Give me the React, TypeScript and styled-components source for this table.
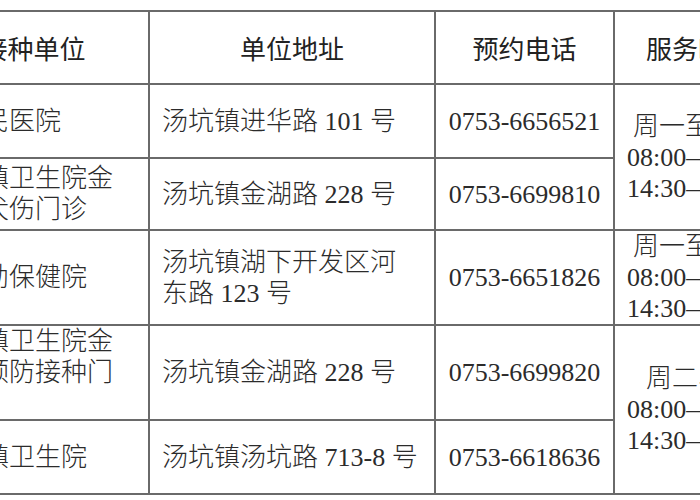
import React from "react";
import styled, { createGlobalStyle } from "styled-components";

const GlobalStyle = createGlobalStyle`
  html, body { margin: 0; padding: 0; background: #ffffff; }
  body { font-family: "Liberation Serif", "Noto Sans CJK SC", serif; }
`;

const Viewport = styled.div`
  width: 700px;
  height: 500px;
  overflow: hidden;
  background: #ffffff;
  padding-top: 10px;
  box-sizing: border-box;
`;

const Table = styled.table`
  border-collapse: collapse;
  table-layout: fixed;
  width: 864px;
  margin-left: -83px;
  font-family: "Liberation Serif", "Noto Sans CJK SC", serif;
  font-size: 26px;
  line-height: 31px;
  color: #2b2b2b;
`;

const Row = styled.tr<{ $h: number }>`
  height: ${(p) => p.$h}px;
`;

const HeadCell = styled.th`
  border: 2px solid #6a6a6a;
  padding: 0 12px;
  font-family: "Noto Sans CJK SC", sans-serif;
  font-weight: 400;
  text-align: center;
  vertical-align: middle;
  white-space: nowrap;
  color: #222222;
`;

const Cell = styled.td<{ $align?: "left" | "center" }>`
  border: 2px solid #6a6a6a;
  padding: 0 12px;
  font-weight: 300;
  text-align: ${(p) => p.$align ?? "left"};
  vertical-align: middle;
  white-space: nowrap;
`;

type Entry = {
  unit: string[];
  addr: string[];
  phone: string;
  h: number;
  hours?: { lines: string[]; span: number };
};

const hoursA = ["周一至周五", "08:00—12:00", "14:30—17:30"];
const hoursB = ["周二、四", "08:00—12:00", "14:30—17:30"];

const rows: Entry[] = [
  { unit: ["县人民医院"], addr: ["汤坑镇进华路 101 号"], phone: "0753-6656521", h: 74, hours: { lines: hoursA, span: 2 } },
  { unit: ["汤坑镇卫生院金", "湖狂犬伤门诊"], addr: ["汤坑镇金湖路 228 号"], phone: "0753-6699810", h: 72 },
  { unit: ["县妇幼保健院"], addr: ["汤坑镇湖下开发区河", "东路 123 号"], phone: "0753-6651826", h: 94, hours: { lines: hoursA, span: 1 } },
  { unit: ["汤坑镇卫生院金", "湖区预防接种门", "诊"], addr: ["汤坑镇金湖路 228 号"], phone: "0753-6699820", h: 94, hours: { lines: hoursB, span: 2 } },
  { unit: ["汤坑镇卫生院"], addr: ["汤坑镇汤坑路 713-8 号"], phone: "0753-6618636", h: 74 },
];

const Lines: React.FC<{ lines: string[] }> = ({ lines }) => (
  <>
    {lines.map((l, i) => (
      <React.Fragment key={i}>
        {i > 0 && <br />}
        {l}
      </React.Fragment>
    ))}
  </>
);

export default function App() {
  return (
    <>
      <GlobalStyle />
      <Viewport>
        <Table>
          <colgroup>
            <col style={{ width: 231 }} />
            <col style={{ width: 286 }} />
            <col style={{ width: 179 }} />
            <col style={{ width: 168 }} />
          </colgroup>
          <thead>
            <Row $h={73}>
              <HeadCell>接种单位</HeadCell>
              <HeadCell>单位地址</HeadCell>
              <HeadCell>预约电话</HeadCell>
              <HeadCell>服务时间</HeadCell>
            </Row>
          </thead>
          <tbody>
            {rows.map((r, i) => (
              <Row key={i} $h={r.h}>
                <Cell>
                  <Lines lines={r.unit} />
                </Cell>
                <Cell>
                  <Lines lines={r.addr} />
                </Cell>
                <Cell $align="center">{r.phone}</Cell>
                {r.hours && (
                  <Cell $align="center" rowSpan={r.hours.span}>
                    <Lines lines={r.hours.lines} />
                  </Cell>
                )}
              </Row>
            ))}
          </tbody>
        </Table>
      </Viewport>
    </>
  );
}
